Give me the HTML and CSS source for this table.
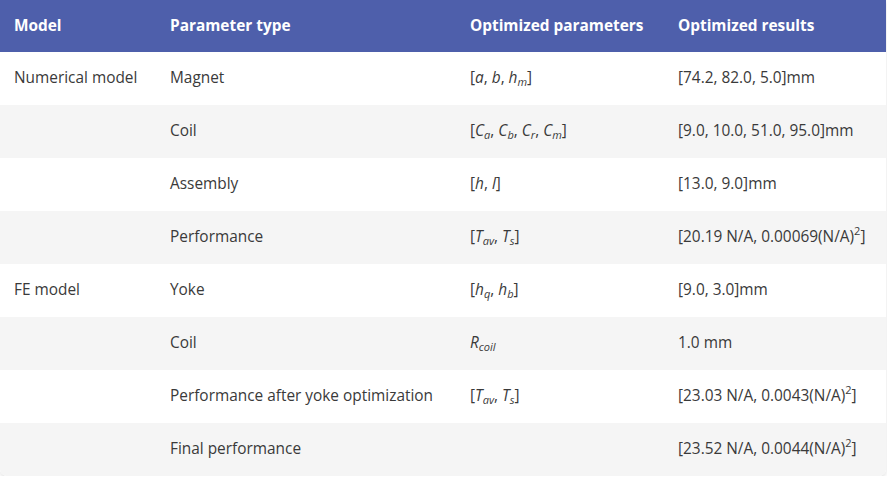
FILE: index.html
```html
<!DOCTYPE html>
<html>
<head>
<meta charset="utf-8">
<link rel="stylesheet" href="styles.css">
</head>
<body>
<div class="wrap">
<table class="results">
  <colgroup>
    <col class="c1"><col class="c2"><col class="c3"><col class="c4">
  </colgroup>
  <thead>
    <tr><th>Model</th><th>Parameter type</th><th>Optimized parameters</th><th>Optimized results</th></tr>
  </thead>
  <tbody>
    <tr><td>Numerical model</td><td>Magnet</td><td>[<i>a</i>, <i>b</i>, <i>h<sub>m</sub></i>]</td><td>[74.2, 82.0, 5.0]mm</td></tr>
    <tr><td></td><td>Coil</td><td>[<i>C<sub>a</sub></i>, <i>C<sub>b</sub></i>, <i>C<sub>r</sub></i>, <i>C<sub>m</sub></i>]</td><td>[9.0, 10.0, 51.0, 95.0]mm</td></tr>
    <tr><td></td><td>Assembly</td><td>[<i>h</i>, <i>l</i>]</td><td>[13.0, 9.0]mm</td></tr>
    <tr><td></td><td>Performance</td><td>[<i>T<sub>av</sub></i>, <i>T<sub>s</sub></i>]</td><td>[20.19 N/A, 0.00069(N/A)<sup>2</sup>]</td></tr>
    <tr><td>FE model</td><td>Yoke</td><td>[<i>h<sub>q</sub></i>, <i>h<sub>b</sub></i>]</td><td>[9.0, 3.0]mm</td></tr>
    <tr><td></td><td>Coil</td><td><i>R<sub>coil</sub></i></td><td>1.0 mm</td></tr>
    <tr><td></td><td>Performance after yoke optimization</td><td>[<i>T<sub>av</sub></i>, <i>T<sub>s</sub></i>]</td><td>[23.03 N/A, 0.0043(N/A)<sup>2</sup>]</td></tr>
    <tr><td></td><td>Final performance</td><td></td><td>[23.52 N/A, 0.0044(N/A)<sup>2</sup>]</td></tr>
  </tbody>
</table>
</div>
</body>
</html>
```
FILE: styles.css
```css
html, body {
  margin: 0;
  padding: 0;
  background: #ffffff;
}
body {
  font-family: "Open Sans", "Noto Sans", sans-serif;
  font-size: 15.4px;
  color: #3a3a3a;
}
.wrap {
  width: 886px;
  border-radius: 0 0 7px 7px;
  box-shadow: 0 2px 4px rgba(0, 0, 0, 0.12);
  overflow: hidden;
}
.results {
  width: 886px;
  border-collapse: collapse;
  table-layout: fixed;
}
.c1 { width: 156px; }
.c2 { width: 300px; }
.c3 { width: 208px; }
.c4 { width: 222px; }
.results th {
  background: #4e5fab;
  color: #ffffff;
  font-weight: 700;
  text-align: left;
  height: 52px;
  padding: 0 14px 1px;
  box-sizing: border-box;
  vertical-align: middle;
  line-height: 20px;
}
.results td {
  height: 53px;
  padding: 0 14px 2px;
  box-sizing: border-box;
  vertical-align: middle;
  line-height: 20px;
  white-space: nowrap;
}
.results tbody tr:nth-child(even) td {
  background: #f5f5f5;
}
.results i {
  font-style: italic;
}
.results sub {
  font-size: 11px;
  vertical-align: -3px;
  line-height: 0;
}
.results sup {
  font-size: 11px;
  vertical-align: 7px;
  line-height: 0;
}
```
